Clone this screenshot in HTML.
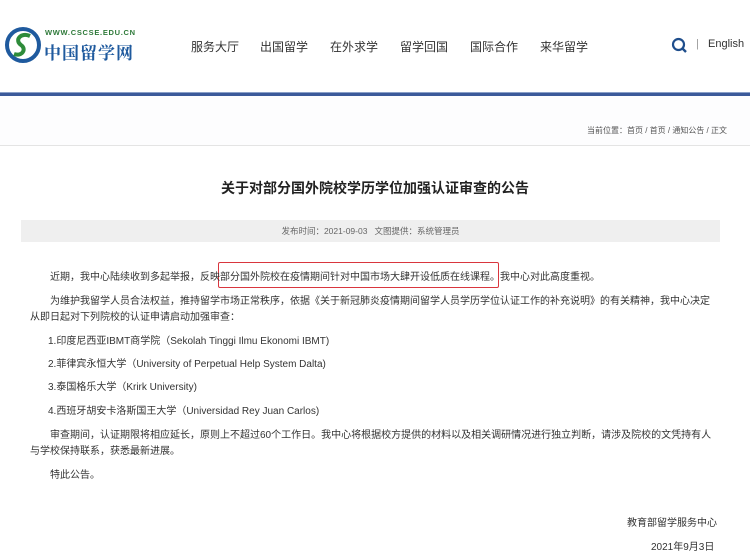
<!DOCTYPE html>
<html><head><meta charset="utf-8"><style>
*{margin:0;padding:0;box-sizing:border-box}
body{width:750px;height:558px;overflow:hidden;background:#fff;font-family:"Liberation Sans","Noto Sans CJK SC",sans-serif;color:#333;position:relative}
.a{position:absolute;white-space:nowrap}
.nav{font-size:12px;color:#333;top:38px}
.p{font-size:10px;color:#333;left:30px}
</style></head><body>
<svg class="a" style="left:4px;top:26px" width="38" height="38" viewBox="0 0 38 38">
<circle cx="19" cy="19" r="16" fill="none" stroke="#1f5a9e" stroke-width="4"/>
<path d="M26 10 C17 6 10 14 17 19 C23 23 18 31 10 28" fill="none" stroke="#2e8b3a" stroke-width="4"/>
</svg>
<div class="a" style="left:45px;top:28px;font-size:7.5px;font-weight:bold;color:#2f7a3a;letter-spacing:0.7px">WWW.CSCSE.EDU.CN</div>
<div class="a" style="left:44px;top:39px;font-size:17px;font-weight:bold;color:#1f5a9e;font-family:'Noto Serif CJK SC',serif;letter-spacing:1px">中国留学网</div>
<div class="a nav" style="left:191px">服务大厅</div>
<div class="a nav" style="left:260px">出国留学</div>
<div class="a nav" style="left:330px">在外求学</div>
<div class="a nav" style="left:400px">留学回国</div>
<div class="a nav" style="left:470px">国际合作</div>
<div class="a nav" style="left:540px">来华留学</div>
<svg class="a" style="left:671px;top:37px" width="18" height="17" viewBox="0 0 18 17"><circle cx="7.5" cy="7.5" r="5.5" fill="none" stroke="#1f4e8c" stroke-width="2.2"/><path d="M11.5 11.5 L15 15" stroke="#1f4e8c" stroke-width="2.4"/></svg>
<div class="a" style="left:696px;top:38px;font-size:11px;color:#999">|</div>
<div class="a" style="left:708px;top:38px;font-size:11px;color:#333">English</div>
<div class="a" style="left:0;top:92px;width:750px;height:4px;background:#3b5a9a;border-top:1px solid #8aa0c8"></div>
<div class="a" style="left:0;top:96px;width:750px;height:50px;background:#fdfdfe;border-bottom:1px solid #e4e4e4"></div>
<div class="a" style="left:587px;top:125px;font-size:8px;color:#555">当前位置：首页 / 首页 / 通知公告 / 正文</div>
<div class="a" style="left:0;top:178px;width:750px;text-align:center;font-size:14px;font-weight:bold;color:#222">关于对部分国外院校学历学位加强认证审查的公告</div>
<div class="a" style="left:21px;top:220px;width:699px;height:22px;background:#efefef;text-align:center;font-size:8.5px;line-height:22px;color:#666">发布时间：2021-09-03&nbsp;&nbsp;&nbsp;文图提供：系统管理员</div>
<div class="a" style="left:218px;top:262px;width:281px;height:26px;border:1.5px solid #d9363e;border-radius:2px"></div>
<div class="a p" style="top:268px;left:50px">近期，我中心陆续收到多起举报，反映部分国外院校在疫情期间针对中国市场大肆开设低质在线课程。我中心对此高度重视。</div>
<div class="a p" style="top:292px;left:50px">为维护我留学人员合法权益，推持留学市场正常秩序，依据《关于新冠肺炎疫情期间留学人员学历学位认证工作的补充说明》的有关精神，我中心决定</div>
<div class="a p" style="top:308px">从即日起对下列院校的认证申请启动加强审查：</div>
<div class="a p" style="top:332px;left:48px">1.印度尼西亚IBMT商学院（Sekolah Tinggi Ilmu Ekonomi IBMT)</div>
<div class="a p" style="top:355px;left:48px">2.菲律宾永恒大学（University of Perpetual Help System Dalta)</div>
<div class="a p" style="top:378px;left:48px">3.泰国格乐大学（Krirk University)</div>
<div class="a p" style="top:402px;left:48px">4.西班牙胡安卡洛斯国王大学（Universidad Rey Juan Carlos)</div>
<div class="a p" style="top:426px;left:50px">审查期间，认证期限将相应延长，原则上不超过60个工作日。我中心将根据校方提供的材料以及相关调研情况进行独立判断，请涉及院校的文凭持有人</div>
<div class="a p" style="top:442px">与学校保持联系，获悉最新进展。</div>
<div class="a p" style="top:466px;left:50px">特此公告。</div>
<div class="a p" style="top:514px;left:627px">教育部留学服务中心</div>
<div class="a p" style="top:538px;left:651px">2021年9月3日</div>
</body></html>
